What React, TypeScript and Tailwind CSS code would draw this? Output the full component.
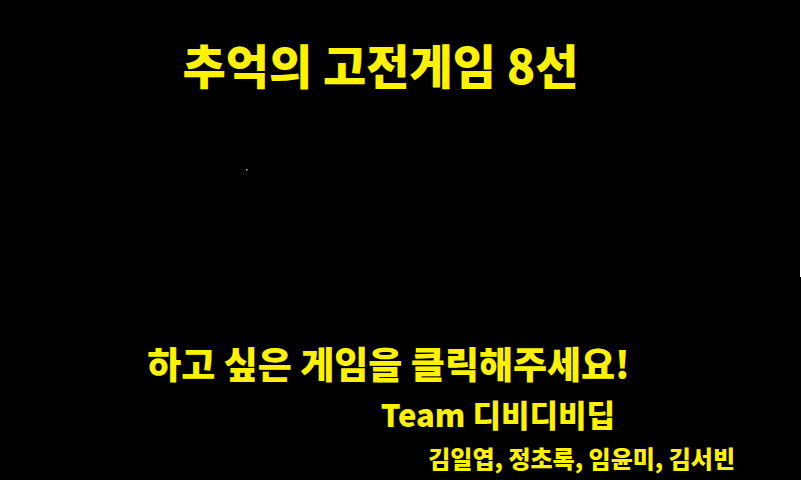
export default function App() {
  return (
    <main className="relative flex min-h-screen flex-col overflow-hidden bg-black font-['Noto_Sans_CJK_KR',sans-serif] font-black whitespace-nowrap text-[#fff200]">
      <h1 className="mt-[34px] pr-10 text-center text-[47px] leading-[60px]">추억의 고전게임 8선</h1>
      <div className="flex-1" />
      <p className="pr-6 text-center text-[37px] leading-[50px]">하고 싶은 게임을 클릭해주세요!</p>
      <p className="mt-1.5 pr-[186px] text-right text-[31px] leading-[40px]">Team 디비디비딥</p>
      <p className="mt-2 mb-1.5 pr-[66px] text-right text-[24px] leading-[32px]">김일엽, 정초록, 임윤미, 김서빈</p>
      <span className="absolute top-0 right-0 h-[277px] w-px bg-white" />
      <svg className="absolute top-[169px] left-[246px]" width="2" height="2" viewBox="0 0 2 2" shapeRendering="crispEdges" aria-hidden="true">
        <path d="M0 0h2v1H1v1H0z" fill="#6f9fb0" />
      </svg>
    </main>
  );
}
